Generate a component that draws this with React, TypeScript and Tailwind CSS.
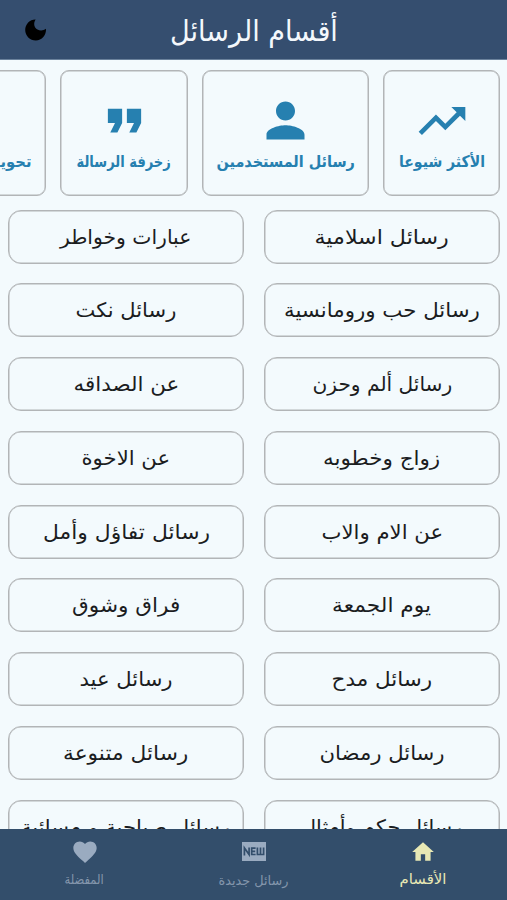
import { useLayoutEffect, useRef, useState } from "react";
import { MdFavorite, MdFormatQuote, MdHome, MdPerson, MdTrendingUp } from "react-icons/md";

type FitProps = { text: string; width: number; className?: string };

// Keeps a label on one line and condenses it to its given width.
function Fit({ text, width, className = "" }: FitProps) {
  const ref = useRef<HTMLSpanElement>(null);
  const [scale, setScale] = useState(1);
  useLayoutEffect(() => {
    if (ref.current) setScale(width / ref.current.offsetWidth);
  }, [text, width]);
  return (
    <span className="flex justify-center" style={{ width }}>
      <span
        ref={ref}
        className={`inline-block shrink-0 whitespace-nowrap ${className}`}
        style={{ transform: `scaleX(${scale})` }}
      >
        {text}
      </span>
    </span>
  );
}

const cards = [
  { label: "الأكثر شيوعا", width: 86, box: "w-[117px]", Icon: MdTrendingUp, icon: "size-[56px]" },
  { label: "رسائل المستخدمين", width: 138, box: "w-[167px]", Icon: MdPerson, icon: "size-[57px]" },
  { label: "زخرفة الرسالة", width: 94, box: "w-[128px]", Icon: MdFormatQuote, icon: "size-[57px]" },
  { label: "تحويل الكتابة", width: 94, box: "w-[124px]", Icon: null, icon: "" },
];

const sections: [string, number][] = [
  ["رسائل اسلامية", 134],
  ["عبارات وخواطر", 131],
  ["رسائل حب ورومانسية", 196],
  ["رسائل نكت", 101],
  ["رسائل ألم وحزن", 140],
  ["عن الصداقه", 106],
  ["زواج وخطوبه", 117],
  ["عن الاخوة", 89],
  ["عن الام والاب", 122],
  ["رسائل تفاؤل وأمل", 167],
  ["يوم الجمعة", 99],
  ["فراق وشوق", 108],
  ["رسائل مدح", 101],
  ["رسائل عيد", 93],
  ["رسائل رمضان", 125],
  ["رسائل متنوعة", 125],
  ["رسائل حكم وأمثال", 161],
  ["رسائل صباحية و مسائية", 209],
];

export default function App() {
  return (
    <div
      dir="rtl"
      className="flex h-[900px] w-[507px] flex-col overflow-hidden bg-[#f3fafd] font-['DejaVu_Sans',sans-serif]"
    >
      <header dir="ltr" className="grid h-[60px] shrink-0 grid-cols-[70px_1fr_70px] items-center border-b border-[#6b829c] bg-[#354e6f]">
        <svg viewBox="0 0 22 22" className="mt-px ml-[25px] size-[22px]" aria-hidden="true">
          <path d="M10.6 0.4C8.2 4.1 9 8.5 12.5 10.5C15.1 12 18.3 11.7 21 9.8C21.5 16.1 16.8 21.5 10.8 21.5C4.9 21.5.2 16.8.2 11C.2 5 5 .2 10.6.4Z" fill="#000" />
        </svg>
        <div dir="rtl" className="flex justify-center pt-[3px] text-[29px] leading-8 text-[#f4f8fc]">
          <Fit text="أقسام الرسائل" width={168} />
        </div>
      </header>

      <main className="min-h-0 flex-1 overflow-hidden">
        <div className="flex gap-[14px] overflow-hidden pt-[10px] pr-[7px] pb-px">
          {cards.map(({ label, width, box, Icon, icon }) => (
            <div
              key={label}
              className={`flex h-[126px] shrink-0 flex-col items-center rounded-[9px] border border-[#b2b5b7] pt-[21px] text-[#2680b0] shadow-[inset_0_0_0_0.5px_#b2b5b7] ${box}`}
            >
              <div className="flex h-[57px] items-center justify-center">{Icon && <Icon className={icon} />}</div>
              <div className="mt-px text-[16px] leading-6 font-bold">
                <Fit text={label} width={width} />
              </div>
            </div>
          ))}
        </div>
        <div className="grid grid-cols-2 gap-x-5 gap-y-[19.8px] pt-[12.5px] pr-[7px] pl-2">
          {sections.map(([label, width]) => (
            <div
              key={label}
              className="flex h-[54px] items-center justify-center rounded-[13px] border border-[#b2b5b7] text-[20px] leading-7 text-[#1b1d1f] shadow-[inset_0_0_0_0.5px_#b2b5b7]"
            >
              <Fit text={label} width={width} />
            </div>
          ))}
        </div>
      </main>

      <nav className="grid h-[71px] shrink-0 grid-cols-3 bg-[#334e6b] text-[#8496ac]">
        <div className="flex flex-col items-center pt-[10px] text-[#e8e8b4]">
          <MdHome className="size-[26px]" />
          <div className="mt-1 text-[14px] leading-5">
            <Fit text="الأقسام" width={47} />
          </div>
        </div>
        <div className="flex flex-col items-center pt-[10px]">
          <svg viewBox="0 0 26 26" className="size-[26px]" aria-hidden="true">
            <rect x="1" y="3" width="24" height="19" fill="#9aabc0" />
            <path
              d="M3.4 16.4V9L8.1 15.6V8.6M14.6 9.2H10.7V15.5H14.6M10.7 12.3H14.2M16.4 8.6V15.5H22.6V8.6M19.5 8.6V15.5"
              fill="none"
              stroke="#334e6b"
              strokeWidth="1.7"
            />
          </svg>
          <div className="mt-[6px] text-[13px] leading-5">
            <Fit text="رسائل جديدة" width={70} />
          </div>
        </div>
        <div className="flex flex-col items-center pt-[9px]">
          <MdFavorite className="size-[28px] text-[#9aabc0]" />
          <div className="mt-1 text-[13px] leading-5">
            <Fit text="المفضلة" width={39} />
          </div>
        </div>
      </nav>
    </div>
  );
}
